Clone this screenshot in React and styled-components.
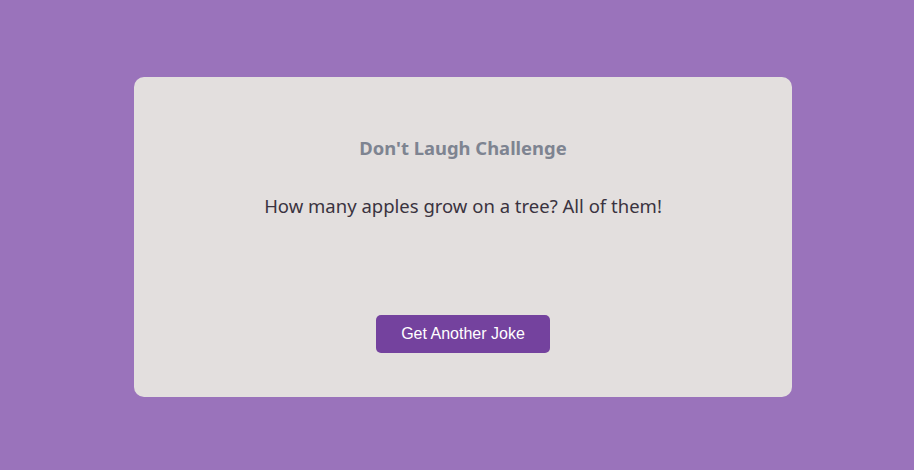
import React from 'react';
import styled, { createGlobalStyle } from 'styled-components';

const GlobalStyle = createGlobalStyle`
  html, body {
    margin: 0;
    padding: 0;
    background: #9a73bb;
    font-family: "Noto Sans", "Open Sans", sans-serif;
  }
`;

const Page = styled.div`
  height: 470px;
  box-sizing: border-box;
  display: flex;
  justify-content: center;
  align-items: flex-start;
  padding: 77px 0 0 12px;
`;

const Card = styled.div`
  width: 658px;
  height: 320px;
  box-sizing: border-box;
  background: #e3dfde;
  border-radius: 10px;
  display: flex;
  flex-direction: column;
  align-items: center;
  padding-top: 59px;
`;

const Title = styled.h3`
  margin: 0;
  font-size: 18.4px;
  line-height: 24px;
  font-weight: 700;
  color: #7e8491;
`;

const Joke = styled.p`
  margin: 34px 0 0;
  font-size: 18.5px;
  line-height: 24px;
  color: #3a3340;
`;

const Button = styled.button`
  margin-top: 97px;
  width: 174px;
  height: 38px;
  border: none;
  border-radius: 5px;
  background: #74429e;
  color: #fff;
  font-family: "Liberation Sans", Arial, sans-serif;
  font-size: 16px;
  cursor: pointer;
`;

export default function App() {
  return (
    <>
      <GlobalStyle />
      <Page>
        <Card>
          <Title>Don't Laugh Challenge</Title>
          <Joke>How many apples grow on a tree? All of them!</Joke>
          <Button>Get Another Joke</Button>
        </Card>
      </Page>
    </>
  );
}
